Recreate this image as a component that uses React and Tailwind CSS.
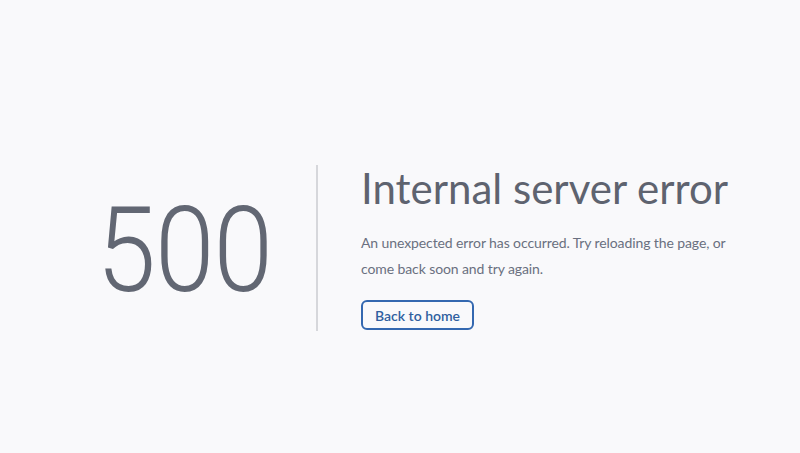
import React from 'react';

const App = () => {
  return (
    <div className="min-h-[453px] w-full bg-[#f9f9fb] font-['Lato',sans-serif]">
      <div className="flex pt-[165px]">
        <div className="w-[316px] flex items-center justify-end pr-[44px]">
          <span className="inline-block origin-right scale-x-[0.9] font-['Roboto',sans-serif] font-light text-[119px] leading-none tracking-[-1px] text-[#626773] translate-y-[2px]">
            500
          </span>
        </div>
        <div className="border-l-2 border-[#d6d7db] pl-[43px] h-[166px] flex flex-col">
          <h1 className="text-[42px] leading-[42px] mt-[2px] text-[#5e636f]">Internal server error</h1>
          <p className="mt-[21px] w-[390px] text-[14px] leading-[26px] tracking-[-0.1px] text-[#6a7080]">
            An unexpected error has occurred. Try reloading the page, or come back soon and try again.
          </p>
          <div className="mt-[18px]">
            <button className="h-[30px] px-[12px] border-2 border-[#3468b0] rounded-[6px] text-[14px] font-semibold text-[#2f5f9f] bg-transparent">
              Back to home
            </button>
          </div>
        </div>
      </div>
    </div>
  );
};

export default App;
